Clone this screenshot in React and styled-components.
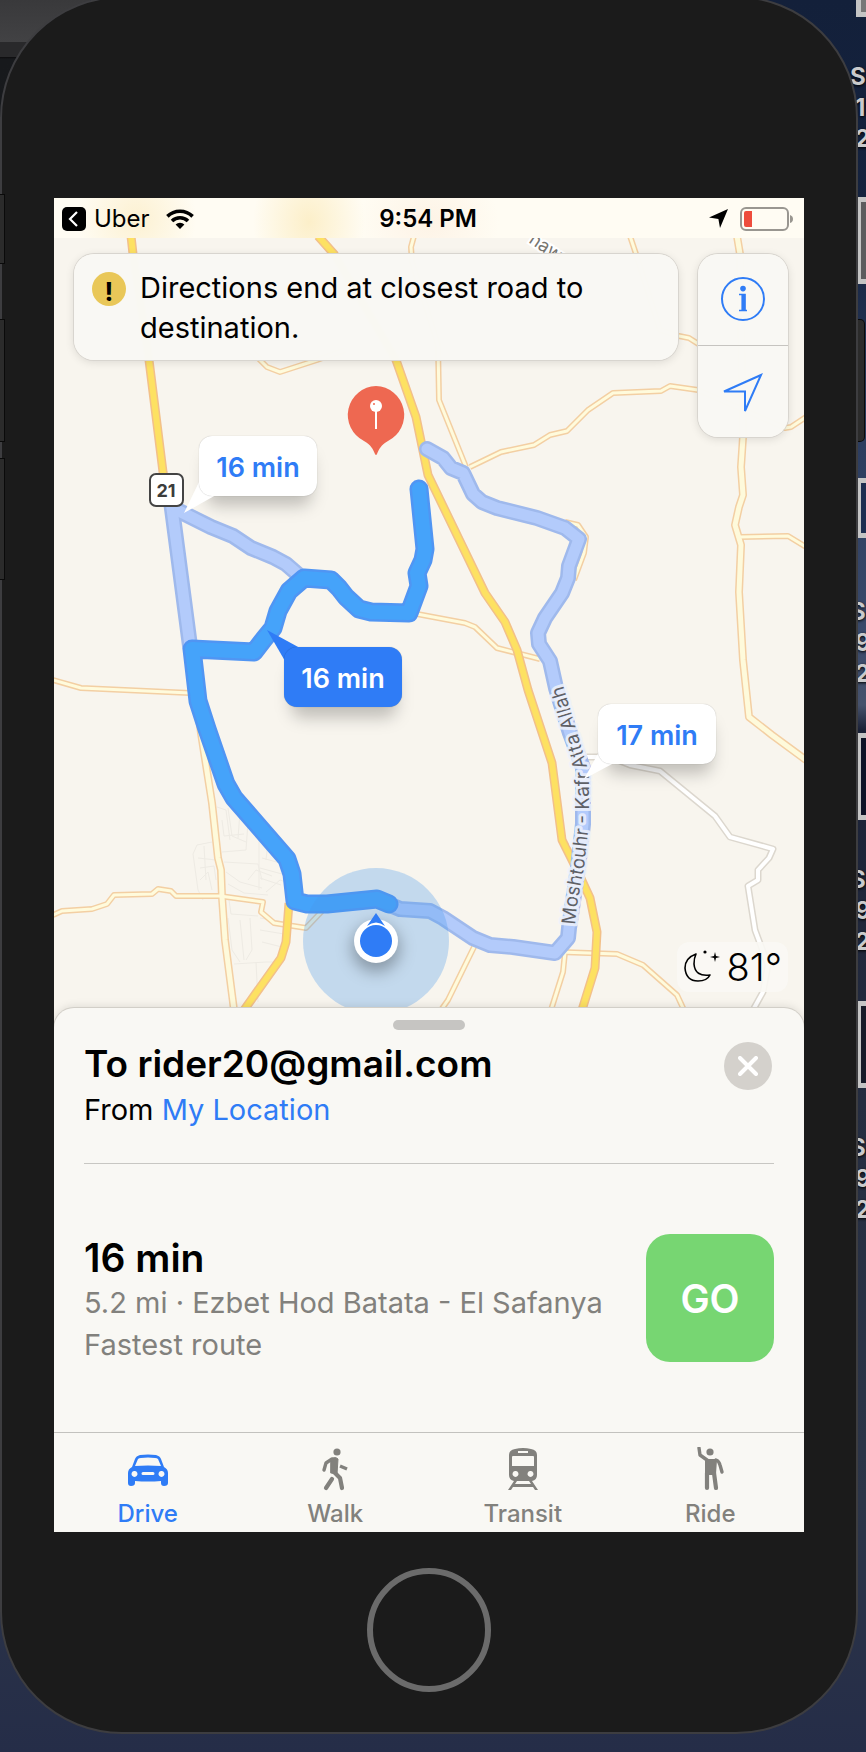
import React from "react";
import styled, { createGlobalStyle } from "styled-components";

const BLUE = "#2f7cf6";
const GREY = "#82817d";

const GlobalStyle = createGlobalStyle`
  * { box-sizing: border-box; }
  body { margin: 0; background: #232b40; }
  button { font: inherit; color: inherit; border: 0; background: none; padding: 0; cursor: pointer; }
  h1, h2, p { margin: 0; }
`;

/* Desktop behind the simulator */
const Desktop = styled.div`
  position: relative;
  overflow: hidden;
  min-height: 100vh;
  padding: 0 8px 18px 0;
  font-family: Inter, "Liberation Sans", sans-serif;
  color: #000;
  background: linear-gradient(#13203a 0, #15233f 220px, #2b3c5e 430px, #3a4a6b 640px, #46526c 705px, #1a2136 730px, #252d40 1100px, #2c3548 1500px, #252d48 1752px);
`;
const EditorWindow = styled.div`
  position: absolute;
  left: 0;
  top: 0;
  width: 90px;
  height: 820px;
  background: linear-gradient(#39393b 0, #424244 42px, #29292b 42px, #29292b 57px, #0c0c0d 57px, #17191c 59px, #1b1d21 100%);
`;
const DesktopFile = styled.div`
  position: absolute;
  left: 850px;
  top: ${(p) => p.$top}px;
  width: 120px;
  color: #c9cacc;
  font-weight: 700;
  font-size: 24px;
  line-height: 31px;
  text-shadow: 0 1px 3px #000;
`;
const Thumbnail = styled.div`
  height: ${(p) => p.$height}px;
  margin: 0 0 ${(p) => p.$gap}px 6px;
  border: 5px solid #c4c4c4;
  background: ${(p) => p.$fill};
`;
const FileLine = styled.div`
  padding-left: ${(p) => (p.$lead ? 0 : 5)}px;
  white-space: nowrap;
`;

/* Device */
const SideButton = styled.div`
  position: absolute;
  ${(p) => (p.$right ? "right: 2px; border-radius: 0 4px 4px 0;" : "left: 0;")}
  top: ${(p) => p.$top}px;
  width: ${(p) => (p.$right ? 10 : 4)}px;
  height: ${(p) => p.$height}px;
  background: #2b2b2b;
  box-shadow: 0 0 0 1px #0a0a0a;
`;
const Phone = styled.main`
  position: relative;
  margin-top: -4px;
  padding: 200px 52px 40px;
  border: 2px solid #3d3d40;
  border-radius: 122px;
  background: #1b1b1b;
`;
const HomeButton = styled.button`
  display: block;
  width: 124px;
  height: 124px;
  margin: 36px auto 0;
  border: 6px solid #6b6b6b;
  border-radius: 50%;
`;
const Screen = styled.div`
  display: flex;
  flex-direction: column;
  background: #f8f5ee;
`;

/* Status bar */
const StatusBar = styled.header`
  display: grid;
  grid-template-columns: 1fr auto 1fr;
  align-items: center;
  height: 40px;
  padding: 1px 10px 0 8px;
  font-size: 24px;
  line-height: 32px;
  background:
    radial-gradient(60px 60px at 11% 50%, #fcf1d2, transparent),
    radial-gradient(56px 70px at 34% 60%, #fcefc9, transparent),
    radial-gradient(70px 60px at 50% 60%, #fdf3e6, transparent),
    #fffcf3;
`;
const StatusGroup = styled.div`
  display: flex;
  align-items: center;
  gap: ${(p) => p.$gap}px;
  justify-content: ${(p) => (p.$end ? "flex-end" : "flex-start")};
`;
const BackButton = styled.button`
  display: flex;
  align-items: center;
  gap: 8px;
`;
const Clock = styled.time`
  font-weight: 600;
`;

/* Map */
const MapArea = styled.section`
  position: relative;
`;
const MapDrawing = styled.svg`
  display: block;
  width: 100%;
  height: auto;
`;
const MapOverlay = styled.div`
  position: absolute;
  inset: 16px 16px auto 20px;
  display: flex;
  align-items: flex-start;
  justify-content: space-between;
  gap: 20px;
`;
const Panel = styled.div`
  border-radius: 20px;
  background: rgba(249, 248, 244, 0.99);
  box-shadow: 0 0 0 1px #d8d5cf, 0 2px 10px rgba(0, 0, 0, 0.12);
`;
const Banner = styled(Panel)`
  flex: 1;
  display: flex;
  gap: 14px;
  padding: 14px 18px 12px;
  font-size: 29px;
  line-height: 40px;
`;
const WarningBadge = styled.span`
  flex: none;
  display: grid;
  place-items: center;
  width: 34px;
  height: 34px;
  margin-top: 4px;
  padding-bottom: 2px;
  border-radius: 50%;
  background: #e9c758;
  font-size: 26px;
  font-weight: 700;
`;
const MapControls = styled(Panel)`
  flex: none;
  width: 90px;
  overflow: hidden;
`;
const ControlButton = styled.button`
  display: grid;
  place-items: center;
  width: 100%;
  height: 91px;
  & + & { height: 92px; border-top: 1px solid #c6c4c0; }
`;
const Callout = styled.button`
  position: absolute;
  width: 118px;
  height: 60px;
  padding-top: 3px;
  border-radius: 13px;
  font-size: 27px;
  font-weight: 600;
  color: ${(p) => (p.$selected ? "#fff" : BLUE)};
  background: ${(p) => (p.$selected ? BLUE : "#fff")};
  box-shadow: 0 0 1px rgba(0, 0, 0, 0.3);
`;
const Weather = styled.div`
  position: absolute;
  right: 16px;
  bottom: 36px;
  display: flex;
  align-items: center;
  gap: 6px;
  height: 50px;
  padding: 0 6px;
  border-radius: 12px;
  background: rgba(250, 248, 244, 0.9);
  font-size: 38px;
  font-weight: 300;
`;

/* Route sheet */
const Sheet = styled.section`
  position: relative;
  margin-top: -20px;
  padding-top: 12px;
  border-radius: 20px 20px 0 0;
  background: #f9f8f4;
  box-shadow: 0 0 0 1px #d2cfc8, 0 -2px 8px rgba(0, 0, 0, 0.1);
  clip-path: inset(-12px 0 0 0);
`;
const Grabber = styled.div`
  width: 72px;
  height: 10px;
  margin: 0 auto;
  border-radius: 5px;
  background: #c6c5c2;
`;
const SheetHeader = styled.div`
  display: flex;
  justify-content: space-between;
  align-items: flex-start;
  margin: 0 30px;
  padding: 10px 0 32px;
  border-bottom: 1px solid #c8c7c3;
`;
const Title = styled.h1`
  font-size: ${(p) => p.$size || 37}px;
  font-weight: 600;
  line-height: 48px;
`;
const TextLine = styled.p`
  font-size: 29px;
  line-height: ${(p) => p.$height || 42}px;
  color: ${(p) => (p.$muted ? GREY : "#000")};
`;
const OriginLink = styled.a`
  color: ${BLUE};
  text-decoration: none;
`;
const CloseButton = styled.button`
  display: grid;
  place-items: center;
  width: 48px;
  height: 48px;
  margin: 2px 2px 0 0;
  border-radius: 50%;
  background: #d4d1cc;
`;
const RouteRow = styled.div`
  display: flex;
  justify-content: space-between;
  align-items: flex-start;
  padding: 70px 30px 66px;
`;
const GoButton = styled.button`
  width: 128px;
  height: 128px;
  border-radius: 24px;
  background: #77d672;
  color: #fff;
  font-size: 39px;
  font-weight: 600;
`;
const TabBar = styled.nav`
  display: grid;
  grid-template-columns: repeat(4, 1fr);
  border-top: 1px solid #c3c2be;
`;
const Tab = styled.button`
  display: flex;
  flex-direction: column;
  align-items: center;
  gap: 8px;
  padding: 14px 0 4px;
  font-size: 24px;
  font-weight: 500;
  line-height: 29px;
  color: ${(p) => (p.$active ? BLUE : GREY)};
`;

/* Map data: polyline points */
const YELLOW_ROADS = [
  "131,236 133,254 149,360 163,472 171,520",
  "318,236 334,254 396,360 416,417 428,475 485,593 505,622 517,650 528,690 552,763 562,840 577,870 590,898 597,932 595,968 582,1010",
  "289,903 286,942 281,958 244,1010",
];
const PALE_ROADS = [
  "53,680 81,688 190,693",
  "414,236 411,247 412,262 438,345 439,400 466,467",
  "250,350 260,360 267,367 280,372 317,360 345,350",
  "470,467 501,452 534,445 550,435 567,431 588,410 613,393 661,391 670,386 698,390 785,428 791,427 806,417",
  "630,236 636,254 660,330 679,336 689,338 700,345",
  "740,537 788,536 806,547",
  "417,614 465,623 475,627 497,648 540,659",
  "565,522 578,525 586,537 584,553 574,580",
  "53,915 62,911 92,909 107,904 114,895 152,894 158,889 171,891 176,896 220,896 263,902 261,912 274,923 306,928 324,909",
  "475,945 448,1000 441,1010",
  "560,952 617,954 643,965 677,995 684,1010",
  "565,952 563,972 551,1010",
];
const WIDE_PALE_ROADS = [
  "189,640 201,733 212,803 218,858 221,870 222,897 225,940 234,1010",
  "737,236 740,254 743,437 741,467 743,495 739,507 735,525 741,545 739,592 743,660 749,717 772,735 806,760",
];
const WHITE_ROADS = [
  "587,757 610,757 630,765 660,771 715,816 730,837 773,849 769,858 758,870 758,880 748,886 755,930 768,965 763,992 753,1010",
];
const LANES = [
  "217,807 226,810 230,840", "212,842 197,845 193,854 198,890 203,900", "198,858 216,860", "200,868 214,866 216,880",
  "228,808 232,836 246,842", "240,812 238,838", "248,822 246,850 222,852", "224,862 258,864 262,880", "226,872 240,882 262,888",
  "228,884 244,893 268,895", "259,826 259,890", "262,858 284,864", "260,868 282,874", "260,878 281,885", "268,842 266,860",
  "228,918 232,950 240,962", "240,920 244,960", "250,918 252,950 246,960", "260,918 284,922", "260,930 284,934",
  "262,942 282,947", "234,964 266,962 284,962", "256,962 258,1002", "200,880 208,872 212,890", "229,900 231,914 258,916",
  "222,820 224,836 244,834", "204,846 206,880", "248,880 256,870 272,876", "266,892 280,880 286,882",
];
const ALT_WEST = ["171,501 190,646", "177,510 211,527 233,536 251,548 273,557 286,564 301,577"];
const ALT_EAST =
  "427,449 443,458 451,468 463,473 473,494 482,502 497,508 537,518 565,528 579,539 569,566 568,578 562,593 545,618 538,633 539,644 550,661 556,688 570,733 583,768 583,824 578,868 569,928 568,938 555,953 513,947 490,945 473,938 443,918 430,911 400,909 388,904";
const MAIN_ROUTE =
  "419,489 425,549 423,560 417,573 419,586 409,613 371,612 359,609 346,597 339,588 331,580 304,578 289,591 278,611 273,628 264,639 254,652 192,649 198,701 207,729 226,784 234,798 287,859 292,874 295,901 307,904 327,904 377,899 389,904";

const MAP = { x: 54, y: 238, w: 750, h: 790 };

function Lines({ sets, color, width, cap = "butt" }) {
  return (
    <g fill="none" stroke={color} strokeWidth={width} strokeLinejoin="round" strokeLinecap={cap}>
      {sets.map((pts) => (
        <polyline key={pts} points={pts} />
      ))}
    </g>
  );
}

function MapPicture() {
  return (
    <MapDrawing viewBox={`${MAP.x} ${MAP.y} ${MAP.w} ${MAP.h}`} role="img" aria-label="Map with three driving routes">
      <defs>
        <path id="street" d="M575 925 L577 905 L584 867 L589 823 L589 773 L577 732 L560 675" />
        <filter id="soft" x="-50%" y="-50%" width="200%" height="200%">
          <feGaussianBlur stdDeviation="8" />
        </filter>
      </defs>
      <rect x={MAP.x} y={MAP.y} width={MAP.w} height={MAP.h} fill="#f8f5ee" />
      <Lines sets={LANES} color="#eeebe4" width={1} />
      <Lines sets={WHITE_ROADS} color="#dcd7ce" width={7} />
      <Lines sets={WHITE_ROADS} color="#ffffff" width={4} />
      <Lines sets={PALE_ROADS} color="#f3cfa3" width={6} />
      <Lines sets={WIDE_PALE_ROADS} color="#f3cfa3" width={8} />
      <Lines sets={PALE_ROADS} color="#fffbdc" width={3} />
      <Lines sets={WIDE_PALE_ROADS} color="#fefadb" width={5} />
      <Lines sets={YELLOW_ROADS} color="#f2c08a" width={9} />
      <Lines sets={YELLOW_ROADS} color="#fde162" width={6} />
      <text transform="translate(528 242) rotate(34)" fontSize="18" fill="#77756f" stroke="#fff" strokeWidth="4" paintOrder="stroke">haw</text>

      <Lines sets={[ALT_EAST, ...ALT_WEST]} color="#9fb9ec" width={16} cap="round" />
      <Lines sets={[ALT_EAST, ...ALT_WEST]} color="#b3cbfb" width={11} cap="round" />
      <Lines sets={[MAIN_ROUTE]} color="#5095f3" width={19} cap="round" />
      <Lines sets={[MAIN_ROUTE]} color="#45a3fa" width={14} cap="round" />

      <text fontSize="19" fill="#5e6066" stroke="#eef2fb" strokeOpacity="0.85" strokeWidth="6" strokeLinejoin="round" paintOrder="stroke">
        <textPath href="#street">Moshtouhr - Kafr Atta Allah</textPath>
      </text>

      <g>
        <rect x="150" y="474" width="33" height="32" rx="6" fill="#fff" stroke="#444" strokeWidth="2" />
        <text x="166" y="497" fontSize="18" fontWeight="700" textAnchor="middle" fill="#3c3c3c">21</text>
      </g>

      <circle cx="376" cy="941" r="73" fill="#4a98ec" fillOpacity="0.3" />
      <circle cx="376" cy="948" r="24" fill="#000" fillOpacity="0.3" filter="url(#soft)" />
      <circle cx="376" cy="941" r="22" fill="#fff" />
      <path d="M376 913 L385 926 Q376 919 367 926 Z" fill={BLUE} />
      <circle cx="376" cy="941" r="16" fill={BLUE} />

      <path d="M376 386 a29 29 0 0 1 12 55 C381 445 379 449 377 454 Q376 456 375 454 C373 449 371 445 364 441 A29 29 0 0 1 376 386 Z" fill="#ee6851" />
      <path d="M376 410 V429" stroke="#fff" strokeWidth="2" />
      <circle cx="376" cy="406" r="6" fill="#fff" />
      <circle cx="374" cy="404" r="1" fill="#ee6851" />

      <g fill="#000" fillOpacity="0.22" filter="url(#soft)">
        <rect x="206" y="454" width="106" height="52" rx="12" />
        <rect x="291" y="666" width="106" height="52" rx="12" />
        <rect x="606" y="722" width="106" height="52" rx="12" />
      </g>
      <path d="M200 480 L184 513 L216 495 L210 480 Z" fill="#fff" />
      <path d="M600 750 L584 779 L614 763 L610 750 Z" fill="#fff" />
      <path d="M285 661 L267 630 L300 648 L296 664 Z" fill={BLUE} />
    </MapDrawing>
  );
}

const CALLOUTS = [
  { label: "16 min", x: 199, y: 436 },
  { label: "16 min", x: 284, y: 647, selected: true },
  { label: "17 min", x: 598, y: 704 },
];

const FILES = [
  { top: -70, height: 87, gap: 44, fill: "#777", lines: ["Sc", "19", "2."] },
  { top: 197, height: 87, gap: 40, fill: "#5c5c5e", lines: [] },
  { top: 478, height: 60, gap: 58, fill: "#1d2d50", lines: ["Sc", "9.", "2."] },
  { top: 733, height: 87, gap: 44, fill: "#0d1226", lines: ["Sc", "9.", "2."] },
  { top: 1001, height: 87, gap: 44, fill: "#171a28", lines: ["Sc", "9.", "2."] },
];

const icons = {
  Drive: (
    <svg width="44" height="44" viewBox="0 0 44 44" fill="currentColor">
      <path fillRule="evenodd" d="M14 8 Q22 7 30 8 Q34 9 35 12 L38 20 Q42 22 42 26 V36 Q42 39 38 39 Q35 39 35 36 V34 Q22 35 9 34 V36 Q9 39 5 39 Q2 39 2 36 V26 Q2 22 6 20 L9 12 Q10 9 14 8 Z M12 12 L9 19 Q22 18 35 19 L32 12 Q31 11 29 11 Q22 10 15 11 Q13 11 12 12 Z M8 24 a3 3 0 1 0 1 0 Z M35 24 a3 3 0 1 0 1 0 Z M17 25 a1 1 0 0 0 0 3 H27 a1 1 0 0 0 0 -3 Z" />
    </svg>
  ),
  Walk: (
    <svg width="44" height="44" viewBox="0 0 44 44" fill="none" stroke="currentColor" strokeLinecap="round" strokeLinejoin="round">
      <circle cx="24" cy="5" r="3.6" fill="currentColor" stroke="none" />
      <path d="M18 12 Q22 9 25 12 L24 27 L18 26 Z" fill="currentColor" stroke="currentColor" strokeWidth="1" />
      <path d="M19 12 L13 16 L11 23" strokeWidth="3.4" />
      <path d="M27 19 L34 22" strokeWidth="3.4" strokeLinecap="butt" />
      <path d="M21 25 L27 31 L29 41" strokeWidth="4.2" />
      <path d="M19 32 L13 41" strokeWidth="4.2" />
    </svg>
  ),
  Transit: (
    <svg width="44" height="44" viewBox="0 0 44 44" fill="currentColor">
      <path fillRule="evenodd" d="M14 2 Q22 0 30 2 Q36 3 36 8 V28 Q36 33 31 34 L37 43 H34 L32 40 H12 L10 43 H7 L13 34 Q8 33 8 28 V8 Q8 3 14 2 Z M17 4 V6 H27 V4 Z M11 10 V19 H33 V10 Q33 9 32 9 H12 Q11 9 11 10 Z M14 24 a3 3 0 1 0 1 0 Z M29 24 a3 3 0 1 0 1 0 Z M16 34 L14 37 H30 L28 34 Z" />
    </svg>
  ),
  Ride: (
    <svg width="44" height="44" viewBox="0 0 44 44" fill="none" stroke="currentColor" strokeLinecap="round" strokeLinejoin="round">
      <circle cx="22" cy="5" r="3.6" fill="currentColor" stroke="none" />
      <path d="M11 1 L12 8 L19 13" strokeWidth="3.4" />
      <path d="M18 13 H28 L27 27 H18 Z" fill="currentColor" strokeWidth="2" />
      <path d="M28 13 Q31 14 32 18 L34 25" strokeWidth="3.4" />
      <path d="M19 26 V41 M26 26 L28 41" strokeWidth="4.2" />
    </svg>
  ),
};

export default function App() {
  return (
    <Desktop>
      <GlobalStyle />
      <EditorWindow />
      {FILES.map((f) => (
        <DesktopFile key={f.top} $top={f.top}>
          <Thumbnail $height={f.height} $gap={f.gap} $fill={f.fill} />
          {f.lines.map((line, i) => (
            <FileLine key={i} $lead={i === 0}>{line}</FileLine>
          ))}
        </DesktopFile>
      ))}
      <SideButton $right $top={320} $height={121} />
      <Phone>
        <Screen>
          <StatusBar>
            <StatusGroup $gap={16}>
              <BackButton>
                <svg width="24" height="24" viewBox="0 0 24 24" aria-hidden="true">
                  <rect width="24" height="24" rx="5" />
                  <path d="M15 5 L8 12 L15 19" fill="none" stroke="#fff" strokeWidth="2.2" />
                </svg>
                Uber
              </BackButton>
              <svg width="28" height="20" viewBox="0 0 28 20" fill="none" stroke="#000" strokeWidth="3.6" aria-label="Wi-Fi">
                <path d="M1.4 7.4 A18 18 0 0 1 26.6 7.4" />
                <path d="M6 12 A11.5 11.5 0 0 1 22 12" />
                <path d="M14 20 L9.6 15.6 A6.4 6.4 0 0 1 18.4 15.6 Z" fill="#000" stroke="none" />
              </svg>
            </StatusGroup>
            <Clock>9:54 PM</Clock>
            <StatusGroup $gap={12} $end>
              <svg width="19" height="19" viewBox="0 0 19 19" aria-label="Location in use">
                <path d="M19 0 L11 19 L9.4 10 L0 8.6 Z" />
              </svg>
              <svg width="54" height="24" viewBox="0 0 54 24" aria-label="Battery low">
                <rect x="1" y="1" width="47" height="22" rx="5" fill="none" stroke="#999690" strokeWidth="2" />
                <path d="M4 6 Q4 4 6 4 H12 V20 H6 Q4 20 4 18 Z" fill="#ee4c3c" />
                <path d="M50 8 Q53 9 53 12 Q53 15 50 16 Z" fill="#999690" />
              </svg>
            </StatusGroup>
          </StatusBar>

          <MapArea>
            <MapPicture />
            {CALLOUTS.map((c) => (
              <Callout
                key={c.x}
                $selected={c.selected}
                style={{ left: `${((c.x - MAP.x) / MAP.w) * 100}%`, top: `${((c.y - MAP.y) / MAP.h) * 100}%` }}
              >
                {c.label}
              </Callout>
            ))}
            <MapOverlay>
              <Banner role="status">
                <WarningBadge>!</WarningBadge>
                <p>Directions end at closest road to destination.</p>
              </Banner>
              <MapControls>
                <ControlButton aria-label="Map information">
                  <svg width="46" height="46" viewBox="0 1 46 46" fill="none" stroke={BLUE}>
                    <circle cx="23" cy="23" r="21" strokeWidth="2" />
                    <circle cx="23" cy="12.6" r="2.8" fill={BLUE} stroke="none" />
                    <path d="M19 18.5 H25 V34 M19 34.5 H27" strokeWidth="1.4" />
                    <path d="M23.4 18 V35" strokeWidth="4" />
                  </svg>
                </ControlButton>
                <ControlButton aria-label="Track my location">
                  <svg width="46" height="46" viewBox="0 0 46 46" fill="none" stroke={BLUE} strokeWidth="2">
                    <path d="M41 6 L4 22.5 H25 V42 Z" />
                  </svg>
                </ControlButton>
              </MapControls>
            </MapOverlay>
            <Weather>
              <svg width="38" height="34" viewBox="0 0 38 34" aria-label="Clear night">
                <path d="M13 4 Q2 8 2 18 Q3 31 15 31 Q24 31 27 25 Q12 27 11 14 Q11 8 13 4 Z" fill="none" stroke="#000" strokeWidth="1.6" strokeLinejoin="round" />
                <circle cx="22" cy="2" r="1.6" />
                <path d="M32 2 L33 6 L37 7 L33 8 L32 12 L31 8 L27 7 L31 6 Z" />
              </svg>
              81°
            </Weather>
          </MapArea>

          <Sheet>
            <Grabber />
            <SheetHeader>
              <div>
                <Title>To rider20@gmail.com</Title>
                <TextLine $height={43}>
                  From <OriginLink href="#origin">My Location</OriginLink>
                </TextLine>
              </div>
              <CloseButton aria-label="Close">
                <svg width="20" height="20" viewBox="0 0 20 20" stroke="#fff" strokeWidth="4" strokeLinecap="round">
                  <path d="M2 2 L18 18 M18 2 L2 18" />
                </svg>
              </CloseButton>
            </SheetHeader>
            <RouteRow>
              <div>
                <Title as="h2" $size={39}>16 min</Title>
                <TextLine $muted>5.2 mi · Ezbet Hod Batata - El Safanya</TextLine>
                <TextLine $muted>Fastest route</TextLine>
              </div>
              <GoButton>GO</GoButton>
            </RouteRow>
            <TabBar>
              {Object.keys(icons).map((name) => (
                <Tab key={name} $active={name === "Drive"} aria-current={name === "Drive" ? "page" : undefined}>
                  {icons[name]}
                  {name}
                </Tab>
              ))}
            </TabBar>
          </Sheet>
        </Screen>
        <HomeButton aria-label="Home" />
      </Phone>
      <SideButton $top={195} $height={68} />
      <SideButton $top={320} $height={121} />
      <SideButton $top={459} $height={120} />
    </Desktop>
  );
}
